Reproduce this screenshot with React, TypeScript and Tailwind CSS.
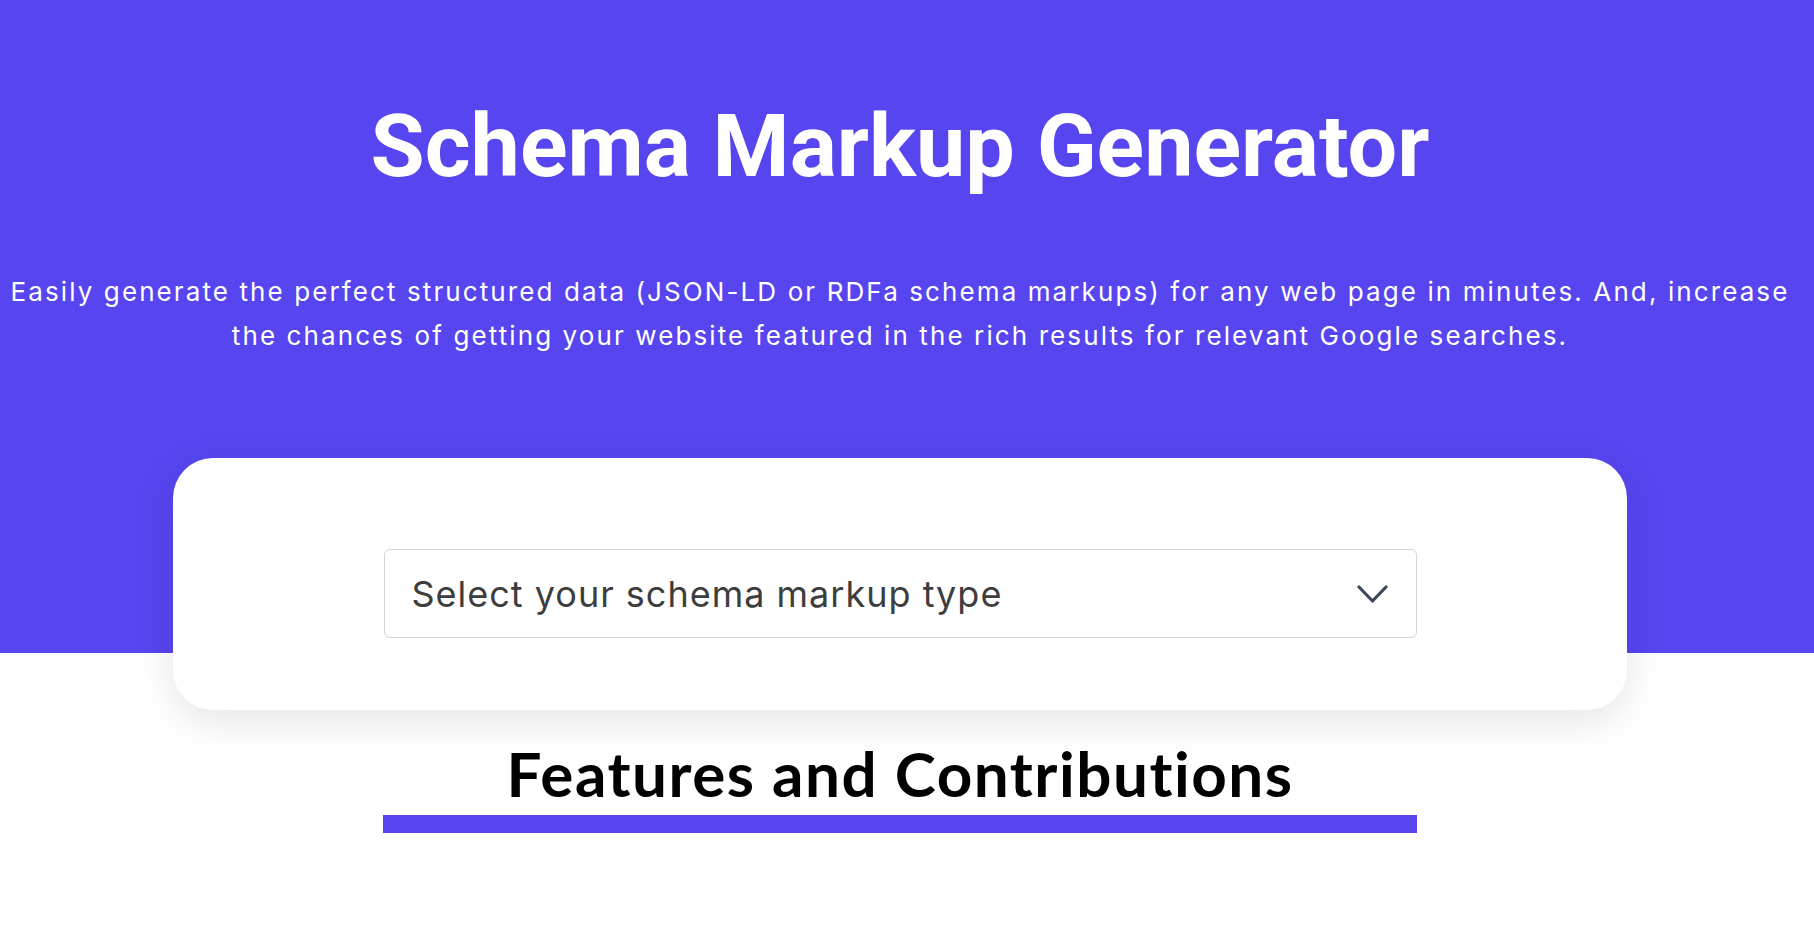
export default function App() {
  return (
    <div className="min-h-[937px] bg-white">
      {/* hero */}
      <div className="bg-[#5745ef]">
        <div className="flex flex-col items-center pr-[14px] pt-[102px]">
          <h1 className="font-['Roboto',sans-serif] text-[88px] font-bold leading-none text-white">
            Schema Markup Generator
          </h1>
          <p className="mt-[80px] text-center font-['Inter',sans-serif] text-[26px] leading-[44px] tracking-[2.1px] text-white">
            Easily generate the perfect structured data (JSON-LD or RDFa schema markups) for any web page in minutes. And, increase
            <br />
            the chances of getting your website featured in the rich results for relevant Google searches.
          </p>
          <div className="relative z-10 mt-[100px] -mb-[57px] flex h-[252px] w-[1454px] justify-center rounded-[40px] bg-white pt-[91px] shadow-[0_12px_40px_rgba(0,0,0,0.1)]">
            <button className="flex h-[89px] w-[1033px] items-center justify-between rounded-[6px] border border-[#d4d4d4] bg-white pl-[27px] pr-[28px]">
              <span className="font-['Inter',sans-serif] text-[36px] tracking-[1px] text-[#3d3d3d]">Select your schema markup type</span>
              <svg width="31" height="18" viewBox="0 0 31 18" fill="none">
                <polyline points="2,2 15.5,16 29,2" stroke="#3b475e" strokeWidth="3.2" strokeLinecap="round" strokeLinejoin="round" />
              </svg>
            </button>
          </div>
        </div>
      </div>

      {/* features */}
      <div className="flex flex-col items-center pr-[14px] pt-[89px]">
        <h2 className="font-['Lato',sans-serif] text-[62px] font-bold leading-none tracking-[1.5px] text-black">Features and Contributions</h2>
        <div className="mt-[11px] h-[18px] w-[1034px] bg-[#5845f0]" />
      </div>
    </div>
  );
}
